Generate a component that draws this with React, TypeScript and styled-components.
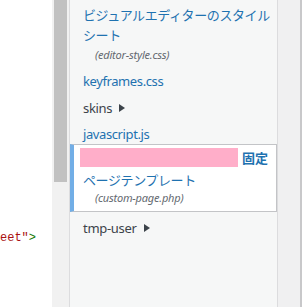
import * as React from 'react';
import styled, { createGlobalStyle } from 'styled-components';

const GlobalStyle = createGlobalStyle`
    html,
    body {
        margin: 0;
        padding: 0;
        width: 302px;
        height: 307px;
        overflow: hidden;
        background: #ffffff;
    }
`;

const Screen = styled.div`
    display: flex;
    height: 307px;
    font-family: 'Noto Sans', 'Noto Sans CJK JP', sans-serif;
`;

const Editor = styled.div`
    width: 52px;
    background: #ffffff;
    padding-top: 230px;
    box-sizing: border-box;
    overflow: hidden;
`;

const CodeLine = styled.div`
    font-family: 'Liberation Mono', monospace;
    font-size: 12px;
    line-height: 17px;
    white-space: pre;
`;

const Token = styled.span<{ $color: string }>`
    color: ${(p) => p.$color};
`;

const Scrollbar = styled.div`
    width: 17px;
    padding: 0 2px;
    box-sizing: border-box;
    background: #f1f1f1;
`;

const Thumb = styled.div`
    height: 182px;
    background: #c1c1c1;
`;

const Sidebar = styled.div`
    width: 209px;
    box-sizing: border-box;
    border-left: 1px solid #dcdcde;
    border-right: 1px solid #dcdcde;
    background: #f6f7f7;
    padding-top: 5px;
    display: flex;
    flex-direction: column;
`;

const Gutter = styled.div`
    flex: 1;
    background: #f0f0f1;
    border-right: 2px solid #c8c8ca;
`;

const Item = styled.div<{ $top?: number }>`
    margin-top: ${(p) => p.$top ?? 0}px;
    padding-left: 13px;
    padding-right: 4px;
`;

const FileLink = styled.a`
    display: block;
    color: #1f72b0;
    font-size: 13px;
    line-height: 20px;
    letter-spacing: -0.4px;
    text-decoration: none;
`;

const FileNote = styled.div<{ $top?: number }>`
    margin-top: ${(p) => p.$top ?? 0}px;
    padding-left: 12px;
    font-size: 11px;
    line-height: 16px;
    font-style: italic;
    letter-spacing: -0.2px;
    color: #646970;
`;

const Folder = styled.div`
    display: flex;
    align-items: center;
    color: #3c434a;
    font-size: 13px;
    line-height: 20px;
    letter-spacing: -0.3px;
`;

const Arrow = styled.span`
    margin-left: 7px;
    width: 0;
    height: 0;
    border-left: 6px solid #3c434a;
    border-top: 4px solid transparent;
    border-bottom: 4px solid transparent;
`;

const Highlight = styled.div`
    border: 1px solid #c3c4c7;
    border-left: 4px solid #72aee6;
    background: #ffffff;
    padding: 3px 4px 5px 9px;
`;

const TitleRow = styled.div`
    display: flex;
    align-items: flex-start;
    height: 22px;
    line-height: 20px;
    font-size: 13px;
`;

const Redaction = styled.span`
    width: 158px;
    height: 19px;
    margin-left: -3px;
    background: #ffaec9;
`;

const Badge = styled.span`
    margin-left: 4px;
    font-weight: bold;
    color: #1f72b0;
`;

export default function App() {
    return (
        <Screen>
            <GlobalStyle />
            <Editor>
                <CodeLine>
                    <Token $color="#aa1111">eet"</Token>
                    <Token $color="#117700">&gt;</Token>
                </CodeLine>
            </Editor>
            <Scrollbar>
                <Thumb />
            </Scrollbar>
            <Sidebar>
                <Item>
                    <FileLink href="#">ビジュアルエディターのスタイルシート</FileLink>
                    <FileNote $top={2}>(editor-style.css)</FileNote>
                </Item>
                <Item $top={8}>
                    <FileLink href="#">keyframes.css</FileLink>
                </Item>
                <Item $top={7}>
                    <Folder>
                        skins
                        <Arrow />
                    </Folder>
                </Item>
                <Item $top={6}>
                    <FileLink href="#">javascript.js</FileLink>
                </Item>
                <Highlight>
                    <TitleRow>
                        <Redaction />
                        <Badge>固定</Badge>
                    </TitleRow>
                    <FileLink href="#">ページテンプレート</FileLink>
                    <FileNote>(custom-page.php)</FileNote>
                </Highlight>
                <Item $top={6}>
                    <Folder>
                        tmp-user
                        <Arrow />
                    </Folder>
                </Item>
            </Sidebar>
            <Gutter />
        </Screen>
    );
}
